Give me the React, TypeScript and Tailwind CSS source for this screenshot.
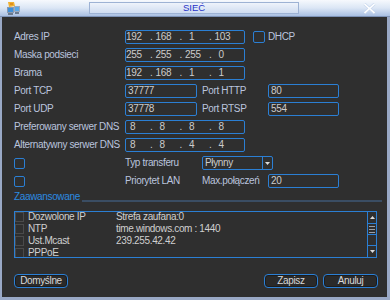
import React from "react";

type P = { className?: string; children?: React.ReactNode };

function Box({ className = "", children }: P) {
  return (
    <div
      className={
        "h-[14px] border border-[#2b7fd4] rounded-[2px] flex items-center text-[#cccccc] " +
        className
      }
    >
      {children}
    </div>
  );
}

function IpField({ parts }: { parts: string[] }) {
  return (
    <Box className="w-[120px]">
      {parts.map((p, i) => (
        <div key={i} className="flex w-[30px]">
          <span className="w-[13px] text-center">{p}</span>
          {i < 3 && <span className="ml-[11px]">.</span>}
        </div>
      ))}
    </Box>
  );
}

function Check({ className = "" }: P) {
  return (
    <div
      className={
        "border border-[#2b7fd4] rounded-[2px] shrink-0 " + className
      }
    />
  );
}

function Btn({ className = "", children }: P) {
  return (
    <div
      className={
        "h-[14px] border border-[#2b7fd4] rounded-[4px] flex items-center justify-center text-[#d8d8d8] bg-[#2a2a2a] shadow-[inset_0_0_0_1px_#1c1c1c] " +
        className
      }
    >
      {children}
    </div>
  );
}

function ListRow({ name, value }: { name: string; value?: string }) {
  return (
    <div className="h-[12px] flex items-center shrink-0 text-[#d0d0d0]">
      <div className="w-[9px] h-[10px] border border-[#4a4a4a] shrink-0" />
      <span className="ml-[4px] w-[88px]">{name}</span>
      <span>{value}</span>
    </div>
  );
}

export default function App() {
  return (
    <div className="w-[390px] h-[300px] flex flex-col bg-[#9aa9c6] font-['Liberation_Sans',Arial,sans-serif] text-[10px] leading-none tracking-[-0.35px] overflow-hidden">
      {/* title bar */}
      <div className="h-[17px] shrink-0 flex items-center bg-linear-to-b from-[#f6f9fd] via-[#dbe6f5] to-[#a9bfe2] border-b border-[#7d92b6]">
        <div className="w-[89px] flex items-center pl-[6px]">
          <svg width="15" height="15" viewBox="0 0 15 15">
            <path d="M2 1 L8 1 L9 5 L3 6 Z" fill="#f0b030" />
            <path d="M4 3 L7 3" stroke="#d07010" strokeWidth="1" />
            <rect x="1" y="6" width="7" height="6" fill="#8a9ab0" />
            <rect x="2" y="7" width="5" height="4" fill="#3f8fd8" />
            <rect x="8" y="5" width="6" height="6" fill="#9aaac0" />
            <rect x="9" y="6" width="4" height="4" fill="#5aa8e8" />
            <rect x="2" y="12" width="5" height="2" fill="#6a7a90" />
            <rect x="9" y="11" width="4" height="2" fill="#6a7a90" />
          </svg>
        </div>
        <div className="w-[210px] h-[12px] flex items-center justify-center bg-linear-to-b from-[#eef3fb] to-[#cfdcf0] border border-[#9db2d4] text-[#2531c8] tracking-normal text-[9.5px]">
          SIEĆ
        </div>
        <div className="flex-1 flex justify-end pr-[14px]">
          <svg width="13" height="11" viewBox="0 0 13 11">
            <path d="M1.5 1 L11.5 10 M11.5 1 L1.5 10" stroke="#c9d8ee" strokeWidth="3" />
            <path d="M1.5 1 L11.5 10 M11.5 1 L1.5 10" stroke="#ffffff" strokeWidth="1.6" />
          </svg>
        </div>
      </div>

      {/* body with frame */}
      <div className="flex-1 flex pl-[2px] pr-[3px] pb-[3px] bg-[#9aa9c6]">
        <div className="flex-1 bg-[#2f2f2f] pl-[12px] pt-[13px] flex flex-col text-[#bac4de]">
          <div className="flex flex-col gap-[4px]">
            <div className="h-[14px] flex items-center">
              <span className="w-[111px]">Adres IP</span>
              <IpField parts={["192", "168", "1", "103"]} />
              <Check className="ml-[8px] w-[12px] h-[12px]" />
              <span className="ml-[3px]">DHCP</span>
            </div>
            <div className="h-[14px] flex items-center">
              <span className="w-[111px]">Maska podsieci</span>
              <IpField parts={["255", "255", "255", "0"]} />
            </div>
            <div className="h-[14px] flex items-center">
              <span className="w-[111px]">Brama</span>
              <IpField parts={["192", "168", "1", "1"]} />
            </div>
            <div className="h-[14px] flex items-center">
              <span className="w-[111px]">Port TCP</span>
              <Box className="w-[72px] pl-[2px]">37777</Box>
              <span className="ml-[5px] w-[66px]">Port HTTP</span>
              <Box className="w-[71px] pl-[2px]">80</Box>
            </div>
            <div className="h-[14px] flex items-center">
              <span className="w-[111px]">Port UDP</span>
              <Box className="w-[72px] pl-[2px]">37778</Box>
              <span className="ml-[5px] w-[66px]">Port RTSP</span>
              <Box className="w-[71px] pl-[2px]">554</Box>
            </div>
            <div className="h-[14px] flex items-center">
              <span className="w-[111px]">Preferowany serwer DNS</span>
              <IpField parts={["8", "8", "8", "8"]} />
            </div>
            <div className="h-[14px] flex items-center">
              <span className="w-[111px]">Alternatywny serwer DNS</span>
              <IpField parts={["8", "8", "4", "4"]} />
            </div>
            <div className="h-[14px] flex items-center">
              <div className="w-[111px] flex items-center">
                <Check className="w-[11px] h-[11px]" />
              </div>
              <span className="w-[77px]">Typ transferu</span>
              <div className="w-[71px] h-[14px] border border-[#2b7fd4] rounded-[2px] flex items-stretch text-[#cccccc]">
                <span className="flex-1 flex items-center pl-[2px]">Płynny</span>
                <div className="w-[10px] border-l border-[#2b7fd4] flex items-center justify-center">
                  <svg width="5" height="3" viewBox="0 0 5 3">
                    <path d="M0 0 L5 0 L2.5 3 Z" fill="#dddddd" />
                  </svg>
                </div>
              </div>
            </div>
            <div className="h-[14px] flex items-center">
              <div className="w-[111px] flex items-center">
                <Check className="w-[11px] h-[11px]" />
              </div>
              <span className="w-[77px]">Priorytet LAN</span>
              <span className="w-[66px]">Max.połączeń</span>
              <Box className="w-[71px] pl-[2px]">20</Box>
            </div>
          </div>

          {/* Zaawansowane */}
          <div className="mt-[3px] h-[12px] flex items-center pr-[5px]">
            <span className="text-[#2b8ae0]">Zaawansowane</span>
            <div className="flex-1 h-[2px] bg-[#3a4d63] mt-[7px] ml-[2px]" />
          </div>

          {/* list */}
          <div className="mt-[8px] w-[363px] h-[47px] border border-[#2b7fd4] flex overflow-hidden">
            <div className="flex-1 flex flex-col overflow-hidden">
              <div className="flex flex-col -mt-[1px]">
                <ListRow name="Dozwolone IP" value="Strefa zaufana:0" />
                <ListRow name="NTP" value="time.windows.com : 1440" />
                <ListRow name="Ust.Mcast" value="239.255.42.42" />
                <ListRow name="PPPoE" />
              </div>
            </div>
            <div className="w-[9px] border-l border-[#2b7fd4] flex flex-col">
              <div className="h-[11px] flex items-center justify-center">
                <svg width="5" height="3" viewBox="0 0 5 3">
                  <path d="M0 3 L5 3 L2.5 0 Z" fill="#dddddd" />
                </svg>
              </div>
              <div className="h-[12px] border-y border-[#2b7fd4] flex flex-col justify-center items-center gap-[2px]">
                <div className="w-[6px] h-px bg-[#9aa0a8]" />
                <div className="w-[6px] h-px bg-[#9aa0a8]" />
                <div className="w-[6px] h-px bg-[#9aa0a8]" />
              </div>
              <div className="flex-1 border-b border-[#2b7fd4]" />
              <div className="h-[11px] flex items-center justify-center">
                <svg width="5" height="3" viewBox="0 0 5 3">
                  <path d="M0 0 L5 0 L2.5 3 Z" fill="#dddddd" />
                </svg>
              </div>
            </div>
          </div>

          {/* buttons */}
          <div className="mt-[16px] w-[364px] flex">
            <Btn className="w-[54px]">Domyślne</Btn>
            <Btn className="w-[54px] ml-auto">Zapisz</Btn>
            <Btn className="w-[55px] ml-[5px]">Anuluj</Btn>
          </div>
        </div>
      </div>
    </div>
  );
}
